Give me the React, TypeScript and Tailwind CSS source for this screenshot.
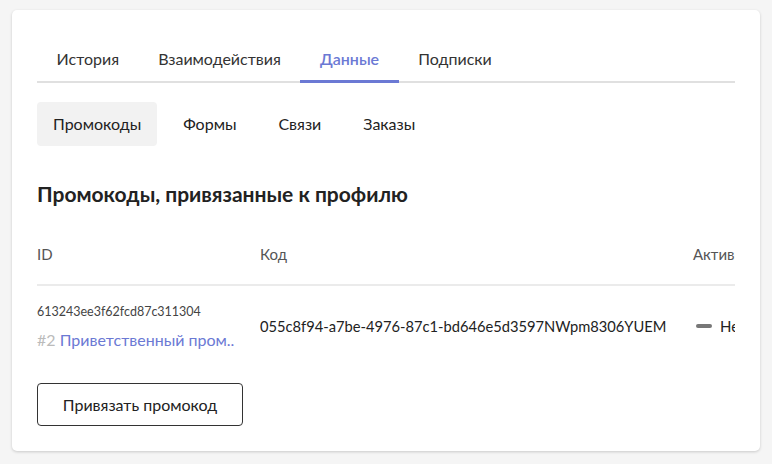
import { useState } from "react";

const TABS = ["История", "Взаимодействия", "Данные", "Подписки"];
const SUBTABS = ["Промокоды", "Формы", "Связи", "Заказы"];

const FONT = "font-['Lato','Noto_Sans',sans-serif]";

export default function App() {
  const [tab, setTab] = useState("Данные");
  const [sub, setSub] = useState("Промокоды");

  return (
    <div className={`min-h-screen bg-[#f5f5f5] pt-[10px] pl-[12px] ${FONT}`}>
      <div className="w-[748px] h-[441px] rounded-[5px] bg-white px-[25px] pt-[27px] shadow-[0_1px_3px_rgba(0,0,0,0.18)]">
        <div className="flex border-b-2 border-[#e0e0e0]">
          {TABS.map((t) => (
            <button
              key={t}
              type="button"
              onClick={() => setTab(t)}
              className={`-mb-[2px] h-[46px] px-[19.6px] text-[16px] ${
                tab === t
                  ? "border-b-[3px] border-[#6b79d4] font-semibold text-[#6b79d4]"
                  : "border-b-2 border-transparent text-[#333]"
              }`}
            >
              {t}
            </button>
          ))}
        </div>

        <div className="mt-[19px] flex gap-[10px]">
          {SUBTABS.map((s) => (
            <button
              key={s}
              type="button"
              onClick={() => setSub(s)}
              className={`h-[44px] rounded-[4px] px-4 text-[16px] text-[#222] ${
                sub === s ? "bg-[#f2f2f2]" : ""
              }`}
            >
              {s}
            </button>
          ))}
        </div>

        <h2 className="mt-[34px] text-[21px] font-bold leading-[28px] text-[#222]">
          Промокоды, привязанные к профилю
        </h2>

        <div className="mt-[16px] overflow-hidden">
          <div className="flex h-[62px] w-[800px] items-center border-b-2 border-[#ebebeb] text-[15px] text-[#555]">
            <div className="w-[223px]">ID</div>
            <div className="w-[433px]">Код</div>
            <div>Активность</div>
          </div>
          <div className="flex h-[80px] w-[800px] items-center">
            <div className="w-[223px]">
              <div className="text-[12.5px] leading-[18px] text-[#444]">613243ee3f62fcd87c311304</div>
              <div className="mt-[9px] truncate text-[16px] leading-[20px] text-[#6b79d4]">
                <span className="text-[#bbb]">#2</span> Приветственный пром..
              </div>
            </div>
            <div className="w-[433px] text-[14.7px] text-[#222]">
              055c8f94-a7be-4976-87c1-bd646e5d3597NWpm8306YUEM
            </div>
            <div className="flex items-center gap-[8px] pl-[3px] text-[15px] text-[#222]">
              <span className="h-[4px] w-[16px] rounded-full bg-[#777]" />
              Неактивен
            </div>
          </div>
        </div>

        <button
          type="button"
          className="mt-[17px] h-[43px] w-[206px] rounded-[4px] border border-[#333] text-[16px] text-[#222]"
        >
          Привязать промокод
        </button>
      </div>
    </div>
  );
}
